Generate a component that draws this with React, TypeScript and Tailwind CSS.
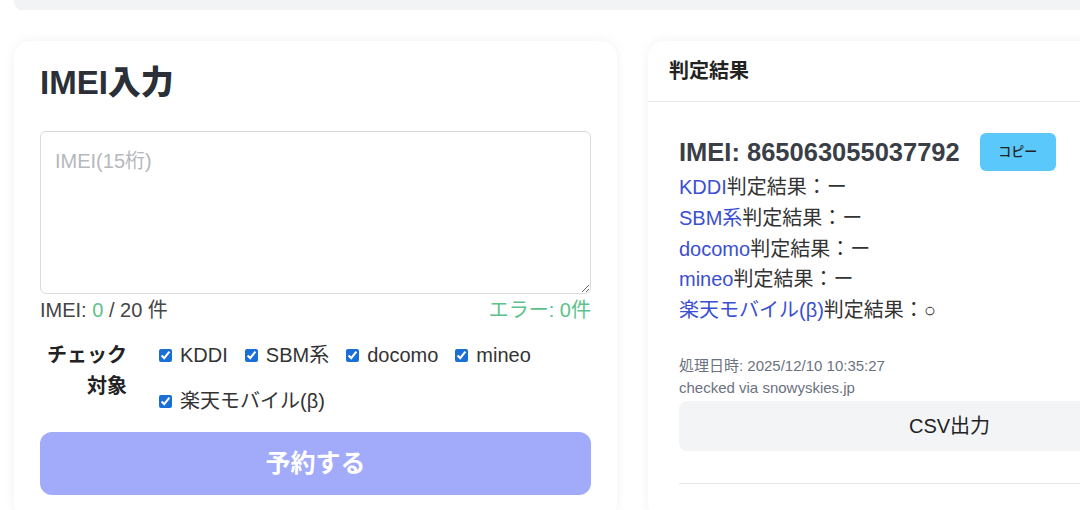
import React from "react";

const carriers = ["KDDI", "SBM系", "docomo", "mineo", "楽天モバイル(β)"];
const results = [
  { name: "KDDI", v: "ー" },
  { name: "SBM系", v: "ー" },
  { name: "docomo", v: "ー" },
  { name: "mineo", v: "ー" },
  { name: "楽天モバイル(β)", v: "○" },
];

export default function App() {
  return (
    <div
      className="relative h-[510px] w-[1080px] overflow-hidden bg-white text-[#333]"
      style={{ fontFamily: '"Liberation Sans", Arial, "Noto Sans CJK JP", sans-serif' }}
    >
      <div className="ml-[14px] h-[10px] w-[1237px] rounded-b-lg bg-[#f1f3f5]" />
      <div className="ml-[14px] mt-[31px] grid w-[1237px] grid-cols-2 gap-[31px]">
        {/* Left card */}
        <div className="rounded-2xl bg-white px-[26px] pt-[22px] pb-6 shadow-[0_0_12px_rgba(0,0,0,0.06)]">
          <h2 className="text-[33px] font-black leading-[40px] text-[#2a2f38]">IMEI入力</h2>
          <textarea
            className="mt-[28px] block h-[163px] w-full resize-y rounded-md border border-[#d9dbde] px-[14px] py-[14px] text-[20px] leading-[30px] outline-none placeholder:text-[#b5b8bd]"
            placeholder="IMEI(15桁)"
          />
          <div className="mt-[1px] flex justify-between text-[20px] leading-[30px]">
            <span className="text-[#444]">
              IMEI: <span className="text-[#5cc28a]">0</span> / 20 件
            </span>
            <span className="text-[#5cc28a]">エラー: 0件</span>
          </div>
          <div className="mt-[15px] flex">
            <div className="w-[87px] text-right text-[20px] font-bold leading-[31px] text-[#222]">
              チェック
              <br />
              対象
            </div>
            <div className="ml-[32px] flex flex-1 flex-wrap gap-x-[17px] gap-y-[15px] text-[20px] leading-[31px] text-[#333]">
              {carriers.map((c) => (
                <label key={c} className="flex items-center gap-[8px]">
                  <input type="checkbox" defaultChecked className="h-[13px] w-[13px] accent-[#1a6fd6]" />
                  <span>{c}</span>
                </label>
              ))}
            </div>
          </div>
          <button className="mt-[15px] h-[63px] w-full rounded-xl bg-[#a2aafa] text-[25px] font-bold text-white">
            予約する
          </button>
        </div>

        {/* Right card */}
        <div className="rounded-2xl bg-white shadow-[0_0_12px_rgba(0,0,0,0.06)]">
          <div className="border-b border-[#e5e7eb] px-[21px] py-[15px] text-[20px] font-bold leading-[30px] text-[#222]">
            判定結果
          </div>
          <div className="px-[31px] pt-[31px]">
            <div className="flex h-[38px] items-center">
              <span className="text-[25.5px] font-bold leading-[36px] text-[#3a3f47]">IMEI: 865063055037792</span>
              <button className="ml-[20px] h-[38px] w-[76px] rounded-md bg-[#5ac8fa] text-[13px] font-medium text-[#222]">
                コピー
              </button>
            </div>
            <div className="mt-[1px] text-[20px] leading-[30.75px] text-[#333]">
              {results.map((r) => (
                <div key={r.name}>
                  <span className="text-[#3b4fd1]">{r.name}</span>判定結果：{r.v}
                </div>
              ))}
            </div>
            <div className="mt-[29px] text-[15px] leading-[22px] text-[#6b7280]">
              処理日時: 2025/12/10 10:35:27
              <br />
              checked via snowyskies.jp
            </div>
            <button className="mt-[2px] h-[50px] w-full rounded-lg bg-[#f3f4f6] text-[20px] text-[#222]">
              CSV出力
            </button>
            <div className="mt-[32px] border-t border-[#e5e7eb]" />
          </div>
        </div>
      </div>
    </div>
  );
}
